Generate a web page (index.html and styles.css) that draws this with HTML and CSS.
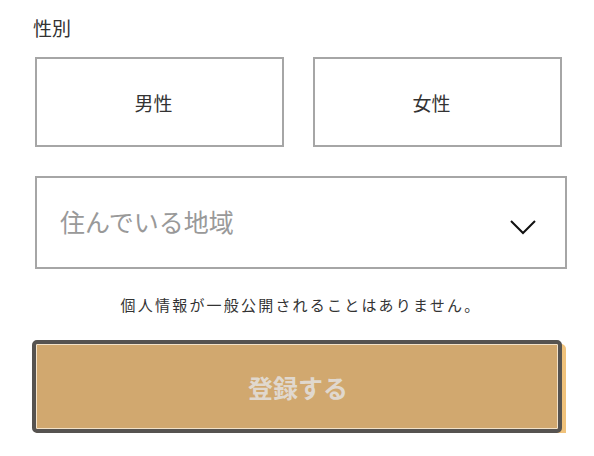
FILE: index.html
```html
<!DOCTYPE html>
<html lang="ja">
<head>
  <meta charset="UTF-8">
  <title>登録</title>
  <meta name="viewport" content="width=device-width,initial-scale=1">
  <link rel="stylesheet" href="styles.css">
</head>
<body>

<form class="signup">
  <div class="field-label">性別</div>
  <div class="gender">
    <label class="gender-opt"><input type="radio" name="gender" value="male">男性</label>
    <label class="gender-opt"><input type="radio" name="gender" value="female">女性</label>
  </div>

  <div class="area">
    <span class="area-text">住んでいる地域</span>
    <svg class="chevron" width="28" height="16" viewBox="0 0 28 16">
      <path d="M2 2 L14 14 L26 2" fill="none" stroke="#111" stroke-width="2"/>
    </svg>
  </div>

  <p class="note">個人情報が一般公開されることはありません。</p>

  <button type="submit" class="submit-btn">登録する</button>
</form>

</body>
</html>
```

FILE: styles.css
```css
body {
  margin: 0;
  background: #fff;
  color: #333;
  font-family: "Noto Sans CJK JP", "Noto Sans", sans-serif;
}
.signup {
  width: 532px;
  padding: 15px 0 0 35px;
}
.field-label {
  font-size: 19px;
  line-height: 26px;
  margin-left: -2px;
}
.gender {
  display: grid;
  grid-template-columns: 249px 249px;
  gap: 29px;
  margin-top: 16px;
}
.gender-opt {
  height: 90px;
  box-sizing: border-box;
  border: 2px solid #a6a6a6;
  display: flex;
  align-items: center;
  justify-content: center;
  padding-right: 12px;
  font-size: 19px;
  color: #333;
  cursor: pointer;
}
.gender-opt input {
  display: none;
}
.area {
  margin-top: 29px;
  height: 93px;
  box-sizing: border-box;
  border: 2px solid #a6a6a6;
  display: flex;
  align-items: center;
  justify-content: space-between;
  padding: 0 28px 0 23px;
}
.area-text {
  font-size: 25px;
  line-height: 30px;
  margin-bottom: 4px;
  color: #999;
}
.chevron {
  margin-top: 8px;
}
.note {
  margin: 25px 0 0;
  text-align: center;
  font-size: 15px;
  line-height: 22px;
  letter-spacing: 2.2px;
  color: #333;
}
.submit-btn {
  display: block;
  width: 530px;
  height: 93px;
  margin: 24px 0 0 -3px;
  padding: 0 0 0 2px;
  background: #d1a86f;
  border: 4px solid #565350;
  border-radius: 5px;
  box-shadow: inset 0 0 0 1px #f3e2c8, 4px 4px 0 #f0c27b;
  color: #e0d8ce;
  font-family: inherit;
  font-size: 25px;
  font-weight: 700;
  line-height: 30px;
  cursor: pointer;
}
```
